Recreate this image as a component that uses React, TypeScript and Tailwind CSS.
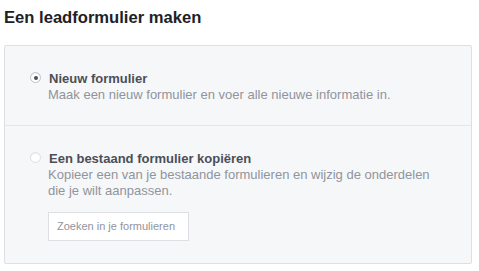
export default function App() {
    return (
        <main className="w-[479px] h-[271px] bg-white" style={{ fontFamily: '"Liberation Sans", Arial, sans-serif' }}>
            <h1 className="pt-[8px] pl-[4px] text-[16.6px] leading-[20px] font-bold text-[#1d2129]">Een leadformulier maken</h1>
            <div className="mt-[17px] ml-[4px] w-[468px] border border-[#dddfe2] rounded-[2px] bg-[#f6f7f9]">
                <div className="flex items-start pl-[25px] pt-[25px] pb-[22px] border-b border-[#e5e6e9]">
                    <span className="mt-[1px] w-[11px] h-[11px] rounded-full border border-[#bec3c9] bg-white flex items-center justify-center shadow-[inset_0_1px_1px_rgba(0,0,0,0.08)]">
                        <span className="w-[4px] h-[4px] rounded-full bg-[#4b4f56]" />
                    </span>
                    <div className="ml-[8px]">
                        <div className="text-[13px] leading-[16px] font-bold text-[#4b4f56]">Nieuw formulier</div>
                        <div className="ml-[-1px] text-[13px] leading-[16px] text-[#90949c]">Maak een nieuw formulier en voer alle nieuwe informatie in.</div>
                    </div>
                </div>
                <div className="flex items-start pl-[25px] pt-[25px] pb-[22px]">
                    <span className="mt-[1px] w-[11px] h-[11px] rounded-full border border-[#dddfe2] bg-white shadow-[inset_0_1px_1px_rgba(0,0,0,0.05)]" />
                    <div className="ml-[8px]">
                        <div className="text-[13px] leading-[16px] font-bold text-[#4b4f56]">Een bestaand formulier kopiëren</div>
                        <div className="ml-[-1px] w-[400px] text-[13px] leading-[16px] text-[#90949c]">Kopieer een van je bestaande formulieren en wijzig de onderdelen die je wilt aanpassen.</div>
                        <div className="ml-[-1px] mt-[13px] w-[141px] h-[29px] border border-[#dddfe2] bg-white pl-[8px] flex items-center text-[11px] text-[#90949c]">Zoeken in je formulieren</div>
                    </div>
                </div>
            </div>
        </main>
    )
}
